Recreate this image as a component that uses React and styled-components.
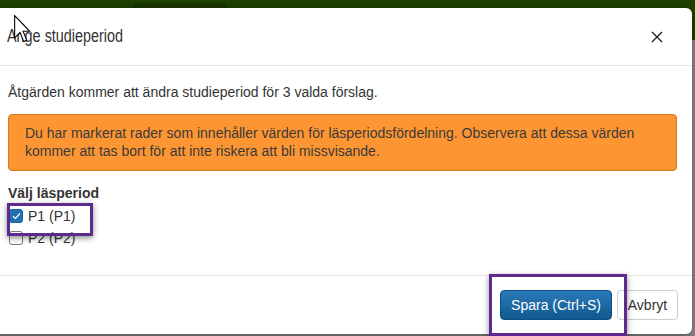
import styled, { createGlobalStyle } from 'styled-components';

const Global = createGlobalStyle`
  html, body { margin: 0; padding: 0; }
  body {
    width: 695px;
    height: 336px;
    overflow: hidden;
    font-family: "Liberation Sans", Arial, sans-serif;
    font-size: 14px;
    color: #333;
  }
`;

const Backdrop = styled.div`
  position: relative;
  width: 695px;
  height: 336px;
  background: #8a8a8a;
  overflow: hidden;
`;

const TopBar = styled.div`
  height: 40px;
  background: #1d4200;
  display: flex;
  align-items: flex-start;
  padding-left: 133px;
`;

const TopTab = styled.div`
  width: 94px;
  height: 5px;
  margin-top: 3px;
  background: #173400;
  border-radius: 3px 3px 0 0;
`;

const Modal = styled.div`
  position: absolute;
  left: -7px;
  top: 8px;
  width: 699px;
  height: 326px;
  background: #fff;
  border-radius: 6px;
  box-shadow: 0 3px 9px rgba(0, 0, 0, 0.4);
  display: flex;
  flex-direction: column;
`;

const Header = styled.div`
  display: flex;
  align-items: center;
  justify-content: space-between;
  height: 57px;
  padding: 0 29px 0 14px;
  border-bottom: 1px solid #e5e5e5;
`;

const Title = styled.h4`
  margin: 0;
  font-size: 18px;
  font-weight: normal;
  color: #333;
  transform: scaleX(0.8);
  transform-origin: left center;
`;

const Close = styled.button`
  border: 0;
  background: none;
  padding: 0;
  display: flex;
  cursor: pointer;
`;

const Body = styled.div`
  flex: 1;
  padding: 15px 15px 0;
  border-bottom: 1px solid #e5e5e5;
`;

const Lead = styled.p`
  margin: 1px 0 12px;
  line-height: 20px;
`;

const Alert = styled.div`
  background: #fd9632;
  border: 1px solid #d9781c;
  border-radius: 4px;
  padding: 9px 16px 10px;
  line-height: 18px;
  color: #3a3a3a;
  margin-bottom: 12px;
`;

const Label = styled.div`
  font-weight: bold;
  line-height: 20px;
  margin-bottom: 2px;
`;

const Option = styled.label`
  display: flex;
  align-items: center;
  gap: 5px;
  height: 22px;
  padding-left: 1px;
  line-height: 20px;
`;

const Box = styled.span`
  width: 14px;
  height: 14px;
  box-sizing: border-box;
  border-radius: 3px;
  display: flex;
  align-items: center;
  justify-content: center;
  background: ${p => (p.$checked ? '#2370b0' : '#fff')};
  border: 1px solid ${p => (p.$checked ? '#1c64a0' : '#7a7a7a')};
`;

const Footer = styled.div`
  display: flex;
  justify-content: flex-end;
  align-items: center;
  gap: 5px;
  height: 58px;
  padding: 0 14px 0 15px;
`;

const Button = styled.button`
  font-family: inherit;
  font-size: 14px;
  height: 30px;
  width: ${p => p.$width}px;
  padding: 0;
  border-radius: 4px;
  cursor: pointer;
  color: ${p => (p.$primary ? '#fff' : '#333')};
  background: ${p => (p.$primary ? 'linear-gradient(#2a7ab9, #10598f)' : '#fff')};
  border: 1px solid ${p => (p.$primary ? '#0e4e80' : '#ccc')};
`;

const Highlight = styled.div`
  position: absolute;
  border: 3px solid #5d2a8e;
  box-shadow: 0 2px 6px rgba(0, 0, 0, 0.45);
  pointer-events: none;
`;

const Cursor = styled.svg`
  position: absolute;
  left: 14px;
  top: 15px;
`;

export default function App() {
  return (
    <Backdrop>
      <Global />
      <TopBar>
        <TopTab />
      </TopBar>
      <Modal>
        <Header>
          <Title>Ange studieperiod</Title>
          <Close aria-label="Stäng">
            <svg width="12" height="12" viewBox="0 0 12 12">
              <path d="M1 1L11 11M11 1L1 11" stroke="#222" strokeWidth="1.4" />
            </svg>
          </Close>
        </Header>
        <Body>
          <Lead>Åtgärden kommer att ändra studieperiod för 3 valda förslag.</Lead>
          <Alert>
            Du har markerat rader som innehåller värden för läsperiodsfördelning. Observera att dessa värden
            kommer att tas bort för att inte riskera att bli missvisande.
          </Alert>
          <Label>Välj läsperiod</Label>
          <Option>
            <Box $checked>
              <svg width="9" height="8" viewBox="0 0 9 8">
                <path d="M1 4.2L3.4 6.5L8 1.5" fill="none" stroke="#fff" strokeWidth="1.2" />
              </svg>
            </Box>
            P1 (P1)
          </Option>
          <Option>
            <Box />
            P2 (P2)
          </Option>
        </Body>
        <Footer>
          <Button $primary $width={112}>Spara (Ctrl+S)</Button>
          <Button $width={61}>Avbryt</Button>
        </Footer>
      </Modal>
      <Highlight style={{ left: 7, top: 203, width: 80, height: 27 }} />
      <Highlight style={{ left: 489, top: 274, width: 132, height: 56 }} />
      <Cursor width="17" height="29" viewBox="0 0 14 24">
        <path d="M0.5 0.5L0.5 19L5 14.5L8 22L10.5 21L7.5 13.5L13 13.5Z" fill="#fff" stroke="#000" strokeWidth="0.9" />
      </Cursor>
    </Backdrop>
  );
}
